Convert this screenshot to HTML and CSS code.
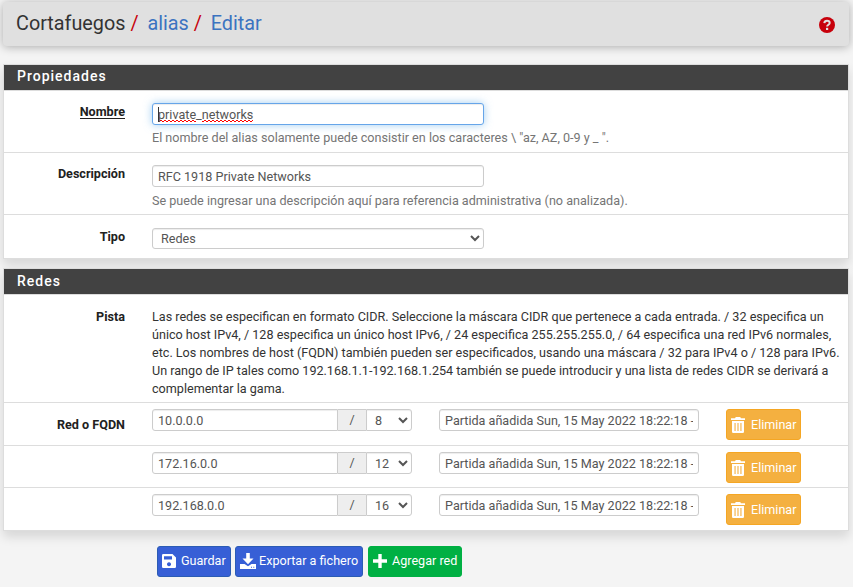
FILE: index.html
```html
<!DOCTYPE html>
<html lang="es">
<head>
<meta charset="utf-8">
<title>Cortafuegos / alias / Editar</title>
<link rel="stylesheet" href="styles.css">
</head>
<body>
<svg class="sprite" aria-hidden="true">
  <symbol id="trash" viewBox="0 0 14 16"><path fill="currentColor" d="M0 1.200h4L4.800 0h4.400l.8 1.200h4V3H0z"/><path fill="currentColor" fill-rule="evenodd" d="M1 4h12v10.800q0 1.200-1.200 1.200H2.200Q1 16 1 14.800zM3.500 6v8H4.600V6zM6.450 6v8h1.100V6zM9.400 6v8h1.100V6z"/></symbol>
</svg>
<header class="topbar">
  <nav class="crumbs"><span>Cortafuegos</span><i class="slash">/</i><a>alias</a><i class="slash">/</i><a>Editar</a></nav>
  <svg class="help" viewBox="0 0 16 16"><circle cx="8" cy="8" r="8" fill="#c7000b"/><path d="M5.300 6.100C5.500 4.400 6.500 3.700 8 3.700s2.700.9 2.700 2.200c0 1.800-2.600 1.800-2.600 3.700" fill="none" stroke="#e0e0e0" stroke-width="2"/><rect x="7" y="10.800" width="2.200" height="2.200" fill="#e0e0e0"/></svg>
</header>

<section class="panel">
  <h2>Propiedades</h2>
  <div class="row name-row">
    <label class="required">Nombre</label>
    <div class="field">
      <div class="control focused"><span class="caret"></span><span class="misspelt">private</span>_<span class="misspelt">networks</span></div>
      <p class="hint">El nombre del alias solamente puede consistir en los caracteres \ "az, AZ, 0-9 y _ ".</p>
    </div>
  </div>
  <div class="row desc-row">
    <label>Descripción</label>
    <div class="field">
      <input class="control" value="RFC 1918 Private Networks">
      <p class="hint">Se puede ingresar una descripción aquí para referencia administrativa (no analizada).</p>
    </div>
  </div>
  <div class="row type-row">
    <label>Tipo</label>
    <div class="field"><select class="control type"><option>Redes</option></select></div>
  </div>
</section>

<section class="panel networks">
  <h2>Redes</h2>
  <div class="row info-row">
    <label>Pista</label>
    <p class="info">Las redes se especifican en formato CIDR. Seleccione la máscara CIDR que pertenece a cada entrada. / 32 especifica un<br>único host IPv4, / 128 especifica un único host IPv6, / 24 especifica 255.255.255.0, / 64 especifica una red IPv6 normales,<br>etc. Los nombres de host (FQDN) también pueden ser especificados, usando una máscara / 32 para IPv4 o / 128 para IPv6.<br>Un rango de IP tales como 192.168.1.1-192.168.1.254 también se puede introducir y una lista de redes CIDR se derivará a<br>complementar la gama.</p>
  </div>
  <div class="row net-row first">
    <label>Red o FQDN</label>
    <div class="group"><input class="control address" value="10.0.0.0"><span class="addon">/</span><select class="control mask"><option>8</option></select></div>
    <input class="control note" value="Partida añadida Sun, 15 May 2022 18:22:18 -0300">
    <button class="btn warning"><svg><use href="#trash"/></svg>Eliminar</button>
  </div>
  <div class="row net-row">
    <label></label>
    <div class="group"><input class="control address" value="172.16.0.0"><span class="addon">/</span><select class="control mask"><option>12</option></select></div>
    <input class="control note" value="Partida añadida Sun, 15 May 2022 18:22:18 -0300">
    <button class="btn warning"><svg><use href="#trash"/></svg>Eliminar</button>
  </div>
  <div class="row net-row last">
    <label></label>
    <div class="group"><input class="control address" value="192.168.0.0"><span class="addon">/</span><select class="control mask"><option>16</option></select></div>
    <input class="control note" value="Partida añadida Sun, 15 May 2022 18:22:18 -0300">
    <button class="btn warning"><svg><use href="#trash"/></svg>Eliminar</button>
  </div>
</section>

<div class="actions">
  <button class="btn primary save"><svg viewBox="0 0 14 14"><path fill="currentColor" fill-rule="evenodd" d="M1.300 0H10.500L14 3.500V12.700Q14 14 12.700 14H1.300Q0 14 0 12.700V1.300Q0 0 1.300 0zM2 2.200V5.400H10V2.200zM7 8.200a2 2 0 1 0 .01 0z"/></svg>Guardar</button>
  <button class="btn primary export"><svg viewBox="0 0 16 16"><path fill="currentColor" fill-rule="evenodd" d="M6.200 0h3.600v5.500h3.700L8 11.200 2.500 5.500h3.700zM0 11h4.500L8 13.300 11.500 11H16v5H0zM11 13.700v1h1v-1zM13.300 13.700v1h1v-1z"/></svg>Exportar a fichero</button>
  <button class="btn success"><svg viewBox="0 0 14 14"><path fill="currentColor" d="M5.300 0h3.400v5.300H14v3.400H8.700V14H5.300V8.700H0V5.300h5.300z"/></svg>Agregar red</button>
</div>
</body>
</html>
```
FILE: styles.css
```css
* { box-sizing: border-box; }
body {
  margin: 0;
  padding: 2px 4px 0 3px;
  height: 587px;
  overflow: hidden;
  background: #f4f4f4;
  color: #333;
  font: 12.6px/18px Roboto, sans-serif;
}
p, h2 { margin: 0; }
.sprite { display: none; }

.topbar {
  display: flex;
  justify-content: space-between;
  align-items: center;
  height: 44px;
  margin: 0 0 18px;
  padding: 0 14px 0 13px;
  border-radius: 4px;
  background: #e0e0e0;
  box-shadow: 0 1px 10px rgba(0, 0, 0, .3);
}
.crumbs { display: flex; font-size: 19.8px; line-height: 43px; height: 44px; }
.crumbs a { color: #3b73c0; }
.slash { width: 17px; margin-left: 5px; color: #c7000b; font-style: normal; }
.help { width: 16px; height: 16px; margin-top: 2px; }

.panel {
  margin-bottom: 9px;
  border: 1px solid #ddd;
  background: #fff;
  box-shadow: 0 6px 10px rgba(0, 0, 0, .12);
}
.panel h2 {
  height: 25px;
  padding-left: 13px;
  background: #424242;
  color: #fff;
  font-size: 14px;
  font-weight: 500;
  letter-spacing: 1px;
  line-height: 22px;
}
.panel.networks h2 { line-height: 24px; }
.row {
  display: grid;
  grid-template-columns: 121px 1fr;
  column-gap: 27px;
  align-items: start;
  border-top: 1px solid #ddd;
}
.row label { padding-top: 12px; text-align: right; font-weight: 700; color: #212121; }
.row .required { justify-self: end; padding-top: 14px; border-bottom: 1px solid #212121; line-height: 13px; }
.name-row { height: 62px; }
.desc-row { height: 62px; }
.type-row { height: 44px; }
.info-row { height: 108px; }
.name-row .field, .desc-row .field { padding-top: 12px; }
.type-row .field { padding-top: 13px; }
.type-row label { padding-top: 13px; }

.control {
  display: block;
  width: 332px;
  height: 22px;
  margin: 0;
  padding: 0 5px;
  border: 1px solid #ccc;
  border-radius: 3px;
  background: #fff;
  box-shadow: inset 0 1px 1px rgba(0, 0, 0, .075);
  color: #555;
  font: 12.6px/20px Roboto, sans-serif;
  outline: none;
}
.control.focused {
  position: relative;
  line-height: 22px;
  border-color: #66a5e9;
  box-shadow: inset 0 1px 1px rgba(0, 0, 0, .075), 0 0 8px rgba(102, 175, 233, .6);
}
.caret { position: absolute; left: 5px; top: 3px; width: 1px; height: 15px; background: #333; }
.misspelt {
  background-image:
    linear-gradient(90deg, #f00 2px, transparent 2px),
    linear-gradient(90deg, transparent 2px, #f00 2px);
  background-size: 4px 1px, 4px 1px;
  background-position: left bottom, left 0 bottom 1px;
  background-repeat: repeat-x;
}
.control.type { height: 21px; padding: 0 0 0 4px; }
.hint { margin-top: 4px; color: #757575; }
.desc-row .hint { margin-top: 5px; }
.info { padding-top: 13px; white-space: nowrap; }
.info-row label { padding-top: 13px; }

.net-row { grid-template-columns: 121px 260px 260px 75px; height: 42px; padding-top: 6px; }
.net-row.first, .net-row.last { height: 43px; }
.net-row label { padding-top: 7px; }
.group { display: flex; }
.address { width: 186px; border-radius: 3px 0 0 3px; }
.addon {
  width: 28px;
  height: 22px;
  border: solid #ccc;
  border-width: 1px 0;
  background: #eee;
  color: #555;
  line-height: 20px;
  text-align: center;
}
.mask { width: 46px; padding: 0 0 0 4px; border-radius: 0 3px 3px 0; }
.note { width: 260px; }

.btn {
  display: flex;
  align-items: center;
  gap: 6px;
  height: 31px;
  padding: 0 4px;
  border: 1px solid;
  border-radius: 3px;
  color: #fff;
  font: 12.6px/18px Roboto, sans-serif;
  white-space: nowrap;
}
.btn svg { flex: none; width: 14px; height: 14px; }
.warning { width: 75px; background: #f4b040; border-color: #f5a623; }
.warning svg { height: 16px; margin-top: 1px; }
.actions .btn { justify-content: flex-start; padding: 0 0 2px 4px; }
.primary { background: #375fd6; border-color: #2b5cb4; }
.save { width: 74px; }
.export { width: 128px; }
.actions .export { gap: 3px; }
.export svg { width: 16px; height: 16px; }
.success { width: 94px; margin-left: 1px; background: #00b043; border-color: #00b043; }
.actions .save, .actions .success { gap: 5px; }
.actions { display: flex; gap: 4px; margin: 15px 0 0 154px; }
```
